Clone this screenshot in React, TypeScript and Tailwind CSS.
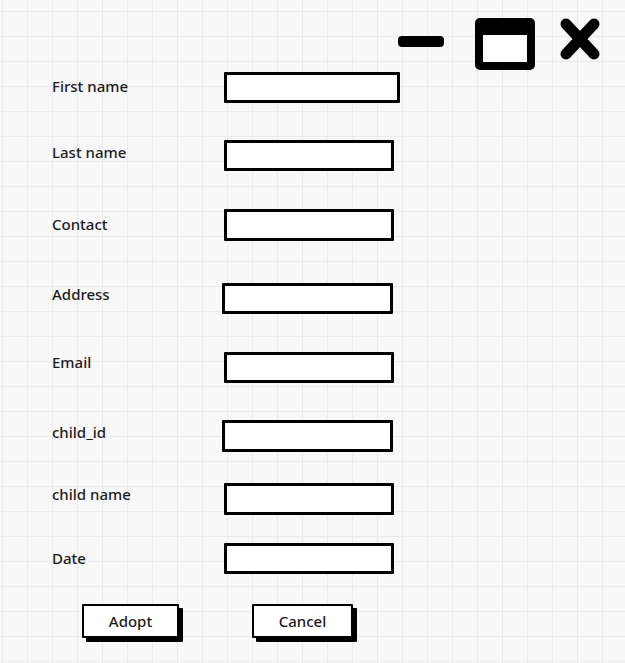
import React from 'react'

// form rows of the wireframe, spacing taken from the mockup
const fields = [
  { label: 'First name', row: 'mt-0', text: 'mt-[4px]', input: 'ml-0 w-[176px] h-[31px]' },
  { label: 'Last name', row: 'mt-[37px]', text: 'mt-[2px]', input: 'ml-0 w-[170px] h-[31px]' },
  { label: 'Contact', row: 'mt-[38px]', text: 'mt-[5px]', input: 'ml-0 w-[170px] h-[32px]' },
  { label: 'Address', row: 'mt-[42px]', text: 'mt-[1px]', input: 'ml-[-2px] w-[171px] h-[31px]' },
  { label: 'Email', row: 'mt-[38px]', text: 'mt-0', input: 'ml-0 w-[170px] h-[31px]' },
  { label: 'child_id', row: 'mt-[37px]', text: 'mt-[2px]', input: 'ml-[-2px] w-[171px] h-[32px]' },
  { label: 'child name', row: 'mt-[31px]', text: 'mt-[1px]', input: 'ml-0 w-[170px] h-[32px]' },
  { label: 'Date', row: 'mt-[28px]', text: 'mt-[5px]', input: 'ml-0 w-[170px] h-[31px]' },
]

function WindowControls() {
  return (
    <div className="flex items-start justify-end pr-[25px]">
      {/* minimize */}
      <svg width="46" height="11" viewBox="0 0 46 11" className="mt-[18px]">
        <rect x="0" y="0" width="46" height="11" rx="4" fill="#000" />
      </svg>
      {/* maximize */}
      <svg width="60" height="52" viewBox="0 0 60 52" className="ml-[31px]">
        <rect x="0" y="0" width="60" height="52" rx="5" fill="#000" />
        <rect x="8" y="17" width="44" height="27" fill="#fff" />
      </svg>
      {/* close */}
      <svg width="40" height="42" viewBox="0 0 40 42" className="ml-[25px]">
        <path d="M6 6 L34 36 M34 6 L6 36" stroke="#000" strokeWidth="11" strokeLinecap="round" />
      </svg>
    </div>
  )
}

function SketchButton({ label, width }: { label: string; width: string }) {
  return (
    <button
      className={`${width} h-[34px] bg-white border-2 border-black rounded-[1px] shadow-[4px_4px_0_#000] text-[15px] font-medium text-[#1c1c1c] flex items-center justify-center`}
    >
      {label}
    </button>
  )
}

export default function App() {
  return (
    <div
      className="w-[625px] h-[663px] overflow-hidden pt-[18px] bg-[#f8f8f8] bg-[linear-gradient(to_right,#ebebeb_1px,transparent_1px),linear-gradient(to_bottom,#ebebeb_1px,transparent_1px)] bg-[size:25px_25px] bg-[position:2px_11px]"
      style={{ fontFamily: '"Noto Sans", "Liberation Sans", sans-serif' }}
    >
      <WindowControls />

      <div className="mt-[2px] pl-[52px] flex flex-col">
        {fields.map((f) => (
          <div key={f.label} className={`flex items-start ${f.row}`}>
            <span className={`w-[172px] text-[15px] leading-[20px] font-medium text-[#1c1c1c] ${f.text}`}>{f.label}</span>
            <div className={`${f.input} bg-white border-[3px] border-black rounded-[1px]`}></div>
          </div>
        ))}
      </div>

      <div className="mt-[30px] pl-[82px] flex gap-[73px]">
        <SketchButton label="Adopt" width="w-[97px]" />
        <SketchButton label="Cancel" width="w-[101px]" />
      </div>
    </div>
  )
}
